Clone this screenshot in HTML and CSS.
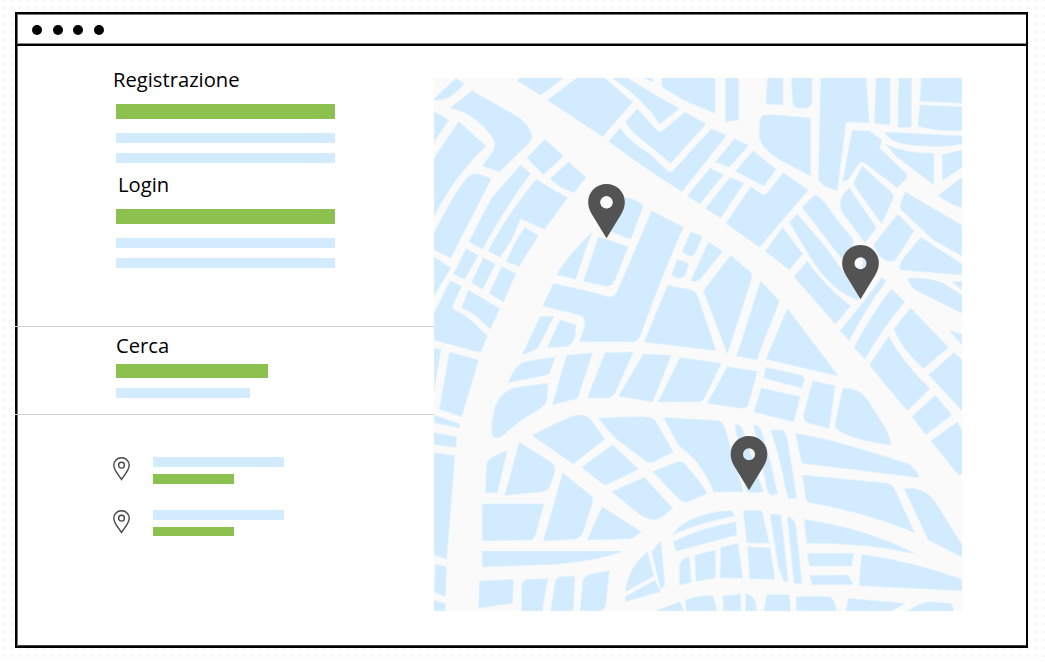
FILE: index.html
```html
<!DOCTYPE html>
<html lang="it">
<head>
<meta charset="utf-8">
<title>Registrazione</title>
<link rel="stylesheet" href="styles.css">
</head>
<body>
<main class="window">
  <header class="titlebar"><i class="dot"></i><i class="dot"></i><i class="dot"></i><i class="dot"></i></header>
  <div class="content">
    <aside class="sidebar">
      <section class="account">
        <h2 class="title title-register">Registrazione</h2>
        <div class="bar strong"></div><div class="bar"></div><div class="bar"></div>
        <h2 class="title title-login">Login</h2>
        <div class="bar strong"></div><div class="bar"></div><div class="bar"></div>
      </section>
      <section class="search">
        <h2 class="title">Cerca</h2>
        <div class="bar strong"></div><div class="bar"></div>
      </section>
      <section class="results">
        <div class="result">
          <svg class="marker" viewBox="0 0 17 24"><path d="M8.5.8C4 .8.8 3.900.8 8.200c0 5 4.900 9.800 7.700 14.200 2.800-4.400 7.700-9.200 7.700-14.200C16.200 3.900 13 .8 8.500.8Z"/><circle cx="8.500" cy="8.200" r="2.900"/></svg>
          <div class="lines"><div class="bar"></div><div class="bar accent"></div></div>
        </div>
        <div class="result">
          <svg class="marker" viewBox="0 0 17 24"><path d="M8.5.8C4 .8.8 3.900.8 8.200c0 5 4.900 9.800 7.700 14.200 2.800-4.400 7.700-9.200 7.700-14.200C16.200 3.900 13 .8 8.500.8Z"/><circle cx="8.500" cy="8.200" r="2.900"/></svg>
          <div class="lines"><div class="bar"></div><div class="bar accent short"></div></div>
        </div>
      </section>
    </aside>
    <svg class="map" viewBox="12 24 1584 1599">
      <g class="blocks">
        <g>
          <path d="M12 88Q40 60 78 24L102 42Q60 95 12 90ZM60 114L126 62L270 144Q320 190 300 216L208 306L157 288L190 242Q204 215 170 180Q120 125 60 114ZM12 124L57 150L12 216ZM86 154L168 228Q80 310 12 438V265Z"/>
          <path d="M12 490Q60 390 105 330Q120 308 145 312L184 326L90 510L63 564L12 540ZM272 284L302 310Q220 420 158 538L117 515Q150 450 185 384ZM318 328L413 384L343 478L272 446L245 510L210 562L174 544L190 512Q250 410 318 328ZM284 472L325 496L318 510Q290 550 268 590L228 574L255 518Z"/>
          <path d="M345 208L400 258L340 314L290 264ZM416 276L468 322L432 368Q390 355 360 326ZM262 32L270 24H400L332 76ZM352 90L440 24H524L608 96L518 200Z"/>
        </g>
        <g transform="translate(510)">
          <path d="M60 382H75Q115 388 130 408L92 508L30 484Q10 440 60 382ZM38 24H82Q150 66 238 116L180 162Q130 88 38 24ZM132 24H158V36ZM185 24H345V130L250 90L200 60Q186 55 185 40ZM376 24H416V150L376 156ZM502 24H549V105L498 102Z"/>
          <path d="M112 116L170 180Q178 188 188 182L255 126L318 162L212 280Q165 240 120 205Q90 180 76 156ZM60 174Q95 220 150 252L203 303Q210 310 218 303L334 176L380 196L246 365Q140 300 26 214ZM404 206L446 226L388 292L346 276ZM460 242L528 298L492 348L406 304ZM330 294L370 314L300 402L262 378ZM390 322L432 340L362 444L316 416Z"/>
          <path d="M452 350L488 374Q498 375 504 366L550 308L625 360L478 532L378 460ZM490 136Q515 130 632 145V318L540 270Q485 235 478 205Q475 140 490 136ZM272 486L308 498L285 550Q280 560 268 558L246 546Z"/>
        </g>
        <g transform="translate(1050)">
          <path d="M34 24H96V95Q95 115 70 115Q40 118 38 95ZM122 24H258L268 158L198 156L172 362Q120 350 115 325ZM288 24H330V165L283 160ZM356 24H394V172H354ZM424 24H546V100L420 94ZM420 105L546 110V182Q460 184 413 168ZM314 186L546 198V222Q500 232 430 228Q330 225 314 186Z"/>
          <path d="M216 182H268L306 210L298 234L378 310Q384 318 378 326L352 354L252 277Q243 272 236 281L205 330L188 334ZM318 224Q380 250 462 250V345L350 260ZM487 254L546 240V292L487 332ZM474 376L546 322V412Q520 410 474 376ZM247 288L337 370Q343 378 339 386L305 462L225 350Q220 342 225 330ZM208 354L284 464Q290 472 284 481L255 518L185 425Q170 385 208 354ZM376 366L546 466V558L460 510L364 420Q358 412 362 400ZM353 432L402 482L345 572Q325 580 300 560L280 525Z"/>
        </g>
        <g transform="translate(0 510)">
          <path d="M487-24L470 20L437 118L380 104Q410 50 487-24ZM12 50L62 84L12 168ZM60 122L95 138L68 198Q68 210 80 213Q112 225 172 288L152 338L12 300V220ZM115 150L210 206L180 268Q130 215 95 204ZM108 26L145 46L104 118L70 102ZM160 54L196 72L158 148L124 128ZM215 80L258 100L220 186L178 160Z"/>
          <path d="M12 325L34 328L12 450ZM58 336L146 360L95 530L28 508ZM12 525L90 552L88 564L12 548ZM330 230L372 228L325 322Q310 335 276 344ZM390 240L438 254Q440 320 400 320L352 322ZM375 350L362 390Q360 404 345 406L235 428Q255 365 300 363ZM354 430L350 482Q345 500 310 518Q270 540 215 590Q195 600 186 585Q182 545 195 500Q215 450 260 442ZM410 346L488 338L443 475L367 494Z"/>
        </g>
        <g transform="translate(510 510)">
          <path d="M0-8L85 20L45 120Q35 142 15 138L-50 124L-5-8ZM155-88L250-38Q180 120 120 290Q112 304 100 305H-62L-47 262Q-40 235-60 226L-172 198L-140 130L-10 160L25 171Q43 173 51 155L118 0ZM325 6L368 34L300 118Q290 128 272 122ZM232 58L266 70L258 100Q250 118 232 114L214 106ZM203 136L275 150Q288 155 293 168L348 332L132 306ZM392 46L450 95Q458 102 455 115L382 342L310 152ZM482 122L538 184L470 360L410 348Z"/>
          <path d="M15 338L100 336L45 460Q35 474 20 474H-38ZM130 342L214 346L158 486L56 468ZM240 352L364 370L312 476Q307 485 295 485L174 486ZM382 380L472 394L445 495Q440 505 425 505L322 490Z"/>
        </g>
        <g transform="translate(1050 510)">
          <path d="M-44 34L8-38L68 42L28 90ZM422-8L546 72V105L362 90Q352 84 370 55ZM52-78L28-54L90 50Q150 150 232 180L236 170L190 95L140 25ZM106-136L66-98L188 60L210 80L220 0L160-75Q135-120 106-136ZM250 50L300 60L262 100L244 95ZM82 64Q140 145 212 198L166 252L42 110ZM306 112L318 124Q260 200 208 302L180 272Q250 190 306 112ZM334 146L374 186Q310 260 255 358L222 322Q270 230 334 146Z"/>
          <path d="M392 204L506 322L430 386Q360 320 342 266ZM326 288Q370 370 450 446L382 512L268 376ZM522 338L546 360V512L446 404ZM466 466L516 524L438 584L396 530ZM382 114Q450 112 490 130L546 165V220L410 152Q390 140 382 114ZM516 126L546 124V150ZM508 270L546 284V316ZM22 205L175 408L-42 358Z"/>
          <path d="M-42 382L65 406Q75 412 73 420L65 444L-50 414ZM-56 444L60 470L42 546L-78 516ZM98 422L165 438L148 566L85 549Q68 544 72 520ZM188 444Q240 445 262 478L320 570L335 615Q240 605 190 580Q165 568 165 555Z"/>
        </g>
        <g transform="translate(0 1050)">
          <path d="M12 38L80 50L78 82L12 74ZM12 98L75 106L50 418L12 405ZM16 432L50 440L46 530L12 515ZM12 540L46 552V573H12ZM232 92L202 218H166L170 130Q180 108 232 92ZM268 66L365 128Q380 140 372 165L358 202Q350 214 335 216L224 226ZM305 46L400 0Q450-28 480-5L524 58L430 132ZM157 252H342L316 345Q312 360 300 360L157 362Z"/>
          <path d="M398 158L480 224Q492 232 487 250L460 335Q450 356 430 358L340 363ZM516 260L633 335Q610 357 595 357L472 360ZM157 393H575Q540 415 380 433L157 441ZM148 484L250 478L248 550L146 565ZM288 478L354 476L336 573H275V490ZM390 470L435 468L430 573H362L375 490Q377 474 390 470ZM475 464L538 452L528 550Q525 573 505 573H450L460 475Z"/>
        </g>
        <g transform="translate(510 1050)">
          <path d="M-55 142L38 74L116 148L20 194Q10 196 0 185ZM-5-5Q100-12 150-8L165 0L220 96L160 126Q145 132 130 118L45 54ZM190-8L355 2Q370 5 380 40L430 215L340 216Q335 190 300 140Q285 115 235 75ZM405 14Q425 10 432 40L490 215Q460 222 440 215ZM460 14Q480 14 486 40L510 120L533 222L515 226Q500 220 498 190ZM512 30H550Q560 40 566 80L590 235H565L555 200Q545 130 512 30ZM132 172L218 264Q180 300 160 300Q140 298 118 282L35 215Z"/>
          <path d="M158 155L225 128Q245 120 258 135Q300 185 322 220L262 246Q250 248 240 240ZM218 345Q230 320 270 300Q340 270 395 272L404 288Q290 310 218 345ZM220 365Q300 325 408 305L410 345L228 394ZM430 272H486L508 370L440 368ZM442 380L510 384L525 478L450 476ZM362 382L414 370L428 475L360 474ZM284 406L346 390V474L288 484ZM268 410L274 486L238 496V440Q240 415 268 410ZM182 362L195 495L182 508L155 395ZM142 396L162 468L76 515Q85 440 142 396ZM165 480L182 515L76 545V530Z"/>
          <path d="M165 573L240 545L252 573ZM255 540Q320 520 340 530Q348 550 350 573H260ZM368 528L422 522V573H370ZM437 522Q468 525 470 573H437ZM500 524H568L572 573H492Z"/>
        </g>
        <g transform="translate(1050 1050)">
          <path d="M532 6L546 30V160L535 165L453 62ZM46 40Q150 55 380 130Q410 145 418 173L66 130ZM66 165L325 190Q340 195 345 210L404 338Q250 275 90 248Q75 245 76 220ZM372 205Q435 200 465 245L546 374V412L445 360ZM72 298Q260 325 408 402Q260 368 80 370ZM82 400H221L215 438H88ZM90 466L205 465L220 494H95ZM245 403Q400 425 546 478V512L237 497Z"/>
          <path d="M-30 282L3 285L25 485H15Q8 480-5 440ZM22 290Q42 290 48 320L66 490H42ZM48 530H150Q165 540 170 573H50ZM205 535L375 550L335 573H198ZM380 573Q430 545 450 545L510 550Q522 558 520 573Z"/>
        </g>
      </g>
      <defs><path id="pin" fill-rule="evenodd" d="M0 0C31 0 55 24 55 55C55 69 50 80 44 91L0 163L-44 91C-50 80-55 69-55 55C-55 24-31 0 0 0ZM0 37A18 18 0 1 0 0 73A18 18 0 1 0 0 37Z"/></defs>
      <g class="pins"><use href="#pin" x="529.500" y="342"/><use href="#pin" x="1291.500" y="525"/><use href="#pin" x="957" y="1098"/></g>
      <circle class="hole" cx="529.500" cy="397" r="18.500"/>
    </svg>
  </div>
</main>
</body>
</html>
```

FILE: styles.css
```css
* { box-sizing: border-box; }
body {
  margin: 0;
  height: 662px;
  overflow: hidden;
  padding: 12px 0 0 15px;
  font-family: "Open Sans", sans-serif;
  color: #000;
  background: #fff conic-gradient(from 270deg at 2px 2px, #f2f2f2 90deg, transparent 0) 3px 7px / 8px 8px;
}
.window {
  width: 1012.500px;
  height: 636px;
  border: 2px solid #000;
  background: #fff;
  box-shadow: inset 1px 1px #777, inset 0 -1px #444;
}
.titlebar {
  height: 32px;
  padding: 11px 0 0 15px;
  display: flex;
  gap: 10.500px;
  border-bottom: 2px solid #000;
  box-shadow: inset 0 -1px #888;
}
.dot { width: 10px; height: 10px; border-radius: 50%; background: #000; }
.content { display: flex; }
.sidebar { width: 417px; }
.account, .search {
  margin-left: -2px;
  padding-left: 101px;
  border-bottom: 1px solid #d2d2d2;
}
.account { height: 281px; padding-top: 19px; }
.search { height: 88px; padding-top: 4px; }
.title { margin: 0; font-size: 20.200px; line-height: 28px; font-weight: 400; }
.title-register { margin-left: -3px; }
.bar { width: 219px; height: 9.700px; background: #d3ebff; margin-bottom: 10.300px; }
.bar + .title-login { margin: -3px 0 0 2px; }
.strong { height: 15px; background: #8cc04f; margin: 11px 0 14px; }
.search .strong { width: 152.400px; height: 14px; margin: 5px 0 10px; }
.search .bar:last-child { width: 134px; }
.results { padding: 42px 0 0 96px; }
.result { display: flex; gap: 23px; height: 53px; }
.marker { width: 17px; height: 24px; fill: none; stroke: #444; stroke-width: 1.400; }
.lines .bar { width: 131px; margin-bottom: 7.300px; }
.lines .accent { width: 81px; background: #8cc04f; }
.lines .short { height: 9px; }
.map { width: 528px; height: 533px; margin-top: 32px; background: #fafafa; }
.blocks { fill: #d3ebff; stroke: #e1f5fd; stroke-width: 2; stroke-linejoin: round; }
.pins { fill: #535353; }
.hole { fill: #fff; }
```
